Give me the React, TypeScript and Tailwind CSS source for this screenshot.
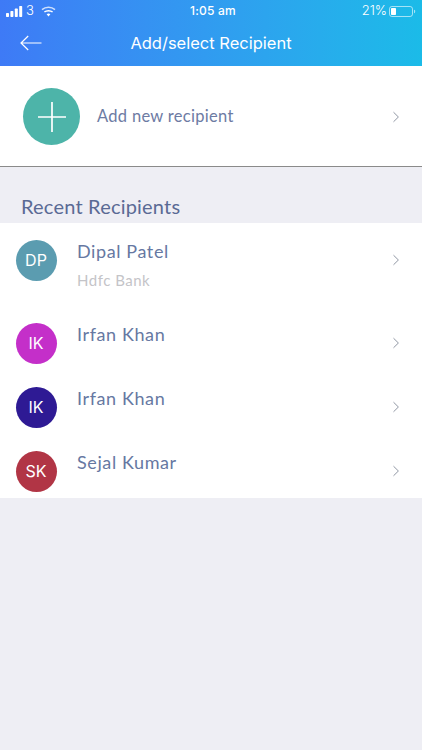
import { Fragment } from 'react';

const recipients = [
  { initials: 'DP', name: 'Dipal Patel', bank: 'Hdfc Bank', color: 'bg-[#5b9cb0]' },
  { initials: 'IK', name: 'Irfan Khan', color: 'bg-[#c42fc9]' },
  { initials: 'IK', name: 'Irfan Khan', color: 'bg-[#2e1a94]' },
  { initials: 'SK', name: 'Sejal Kumar', color: 'bg-[#b13545]' },
];

function Chevron() {
  return (
    <svg width="8" height="12" viewBox="0 0 8 12" fill="none" className="shrink-0">
      <path d="M1.5 1.2 L6.4 6 L1.5 10.8" stroke="#8f96a3" strokeWidth="1" />
    </svg>
  );
}

function StatusBar() {
  return (
    <div className="h-[22px] grid grid-cols-3 items-center pl-[6px] pr-[6px] text-white font-['Inter',sans-serif] text-[12.5px]">
      <div className="flex items-center">
        <svg width="17" height="11" viewBox="0 0 17 11" fill="white">
          <rect x="0" y="7" width="3" height="4" rx="0.7" />
          <rect x="4.4" y="5" width="3" height="6" rx="0.7" />
          <rect x="8.8" y="2.5" width="3" height="8.5" rx="0.7" />
          <rect x="13.2" y="0" width="3" height="11" rx="0.7" />
        </svg>
        <span className="ml-[3px] font-light text-[13px]">3</span>
        <svg width="15" height="11" viewBox="0 0 15 11" fill="none" className="ml-[7px]">
          <path d="M1 3.6 C4.6 0.4 10.4 0.4 14 3.6" stroke="white" strokeOpacity="0.75" strokeWidth="1.5" />
          <path d="M3.4 6 C5.6 4.2 9.4 4.2 11.6 6" stroke="white" strokeWidth="1.5" />
          <path d="M5.6 8.2 C6.6 7.3 8.4 7.3 9.4 8.2 L7.5 10.4 Z" fill="white" />
        </svg>
      </div>
      <div className="text-center font-medium pl-[4px] text-[12px] tracking-[0.2px]">1:05 am</div>
      <div className="flex items-center justify-end">
        <span className="font-light text-[13px]">21%</span>
        <svg width="27" height="11" viewBox="0 0 27 11" fill="none" className="ml-[2px]">
          <rect x="0.5" y="0.5" width="23" height="10" rx="2.4" stroke="white" strokeOpacity="0.6" />
          <rect x="2" y="2" width="5" height="7" rx="0.8" fill="white" />
          <path d="M25 3.8 C26 4 26.2 4.6 26.2 5.5 C26.2 6.4 26 7 25 7.2 Z" fill="white" fillOpacity="0.6" />
        </svg>
      </div>
    </div>
  );
}

export default function App() {
  return (
    <div className="w-[422px] h-[750px] overflow-hidden bg-[#eeeef4] font-['Lato',sans-serif]">
      <header className="h-[66px] bg-gradient-to-r from-[#3e7af6] to-[#1bbbe8]">
        <StatusBar />
        <div className="h-[44px] grid grid-cols-[62px_1fr_62px] items-center pb-[2px]">
          <svg width="22" height="16" viewBox="0 0 22 16" fill="none" className="ml-[20px]">
            <path d="M1 8 H21.5 M8.2 1 L1 8 L8.2 15" stroke="white" strokeWidth="1.2" />
          </svg>
          <h1 className="text-center text-white text-[16.5px] font-['Inter',sans-serif] font-normal whitespace-nowrap">
            Add/select Recipient
          </h1>
        </div>
      </header>

      <section className="h-[101px] bg-white border-b border-[#8a8a8a] flex items-center pl-[23px] pr-[22px] pt-[1px]">
        <div className="w-[57px] h-[57px] rounded-full bg-[#4db4a9] flex items-center justify-center shrink-0">
          <svg width="28" height="30" viewBox="0 0 28 30" fill="none">
            <path d="M14 0 V30 M0 15 H28" stroke="white" strokeWidth="1.7" />
          </svg>
        </div>
        <span className="ml-[17px] flex-1 text-[#6d7ba3] text-[16.5px] tracking-[0.3px]">Add new recipient</span>
        <Chevron />
      </section>

      <div className="h-[56px] flex items-end pl-[21px] pb-[4px]">
        <h2 className="text-[#5a6a94] text-[20px] font-normal tracking-[0.2px] leading-[26px]">Recent Recipients</h2>
      </div>

      <ul className="bg-white">
        {recipients.map((r, i) => (
          <Fragment key={i}>
            <li className={`pl-[15.5px] pr-[22px] pt-[16.5px] flex items-start ${r.bank ? 'h-[83px]' : 'h-[64px]'}`}>
              <div
                className={`w-[41px] h-[41px] rounded-full ${r.color} text-white text-[16px] font-['Inter',sans-serif] flex items-center justify-center shrink-0`}
              >
                {r.initials}
              </div>
              <div className="ml-[20.5px] flex-1 -mt-[1.5px]">
                <div className="text-[#6678a2] text-[18px] leading-[26px] tracking-[0.6px]">{r.name}</div>
                {r.bank && <div className="mt-[6px] text-[#c4c4c8] text-[15px] leading-[20px] tracking-[0.5px]">{r.bank}</div>}
              </div>
              <div className="h-[41px] flex items-center">
                <Chevron />
              </div>
            </li>
          </Fragment>
        ))}
      </ul>
    </div>
  );
}
